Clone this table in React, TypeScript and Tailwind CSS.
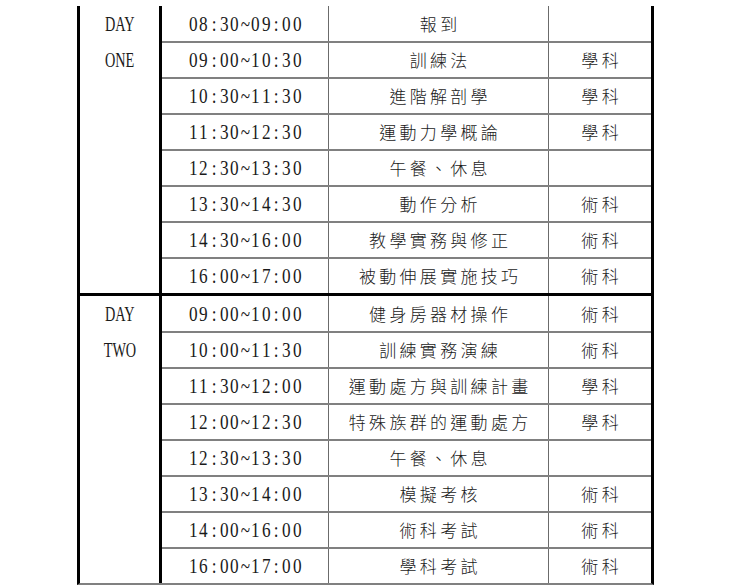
import React from "react";

type Session = {
  time: string;
  title: string;
  kind: string;
};

type Day = {
  label: [string, string];
  sessions: Session[];
};

const days: Day[] = [
  {
    label: ["DAY", "ONE"],
    sessions: [
      { time: "08:30~09:00", title: "報到", kind: "" },
      { time: "09:00~10:30", title: "訓練法", kind: "學科" },
      { time: "10:30~11:30", title: "進階解剖學", kind: "學科" },
      { time: "11:30~12:30", title: "運動力學概論", kind: "學科" },
      { time: "12:30~13:30", title: "午餐、休息", kind: "" },
      { time: "13:30~14:30", title: "動作分析", kind: "術科" },
      { time: "14:30~16:00", title: "教學實務與修正", kind: "術科" },
      { time: "16:00~17:00", title: "被動伸展實施技巧", kind: "術科" },
    ],
  },
  {
    label: ["DAY", "TWO"],
    sessions: [
      { time: "09:00~10:00", title: "健身房器材操作", kind: "術科" },
      { time: "10:00~11:30", title: "訓練實務演練", kind: "術科" },
      { time: "11:30~12:00", title: "運動處方與訓練計畫", kind: "學科" },
      { time: "12:00~12:30", title: "特殊族群的運動處方", kind: "學科" },
      { time: "12:30~13:30", title: "午餐、休息", kind: "" },
      { time: "13:30~14:00", title: "模擬考核", kind: "術科" },
      { time: "14:00~16:00", title: "術科考試", kind: "術科" },
      { time: "16:00~17:00", title: "學科考試", kind: "術科" },
    ],
  },
];

const serif = "font-['Liberation_Serif',serif]";
const cjk = "font-['Noto_Sans_CJK_TC','Noto_Sans_CJK_SC',sans-serif]";

// half-width digits in the source are monospaced, so give each char its own box
function TimeText({ text }: { text: string }) {
  return (
    <span className={`inline-flex text-[20px] leading-none text-[#1a1a1a] ${serif}`}>
      {[...text].map((c, i) => (
        <span key={i} className="inline-block w-[10.4px] text-center scale-x-[0.86]">
          {c}
        </span>
      ))}
    </span>
  );
}

function Cjk({ text }: { text: string }) {
  return (
    <span className={`pl-[3.3px] text-[17px] font-light tracking-[3.3px] text-[#1a1a1a] ${cjk}`}>
      {text}
    </span>
  );
}

export default function App() {
  return (
    <div className="min-h-screen bg-white pt-[6px] pl-[77px]">
      <div className="w-[577px] border-x-[3px] border-b-2 border-x-black border-b-[#808080]">
        {days.map((day, d) => (
          <div key={d} className={d > 0 ? "flex border-t-[3px] border-black" : "flex"}>
            <div
              className={`w-[82px] shrink-0 border-r-[3px] border-black text-center text-[21px] leading-[36px] text-[#1a1a1a] ${serif}`}
            >
              {day.label.map((l) => (
                <div key={l}>
                  <span className="inline-block scale-x-[0.68]">{l}</span>
                </div>
              ))}
            </div>
            <div className="flex-1">
              {day.sessions.map((s, i) => {
                const last = i === day.sessions.length - 1;
                return (
                  <div
                    key={s.time}
                    className={`flex ${i === 0 ? "h-[35px]" : "h-[34px]"} ${
                      last ? "" : "box-content border-b-2 border-[#808080]"
                    }`}
                  >
                    <div className="flex w-[167px] shrink-0 items-center justify-center border-r border-[#6b6b6b]">
                      <TimeText text={s.time} />
                    </div>
                    <div className="flex w-[220px] shrink-0 items-center justify-center border-r border-[#6b6b6b]">
                      <Cjk text={s.title} />
                    </div>
                    <div className="flex flex-1 items-center justify-center">
                      {s.kind && <Cjk text={s.kind} />}
                    </div>
                  </div>
                );
              })}
            </div>
          </div>
        ))}
      </div>
    </div>
  );
}
